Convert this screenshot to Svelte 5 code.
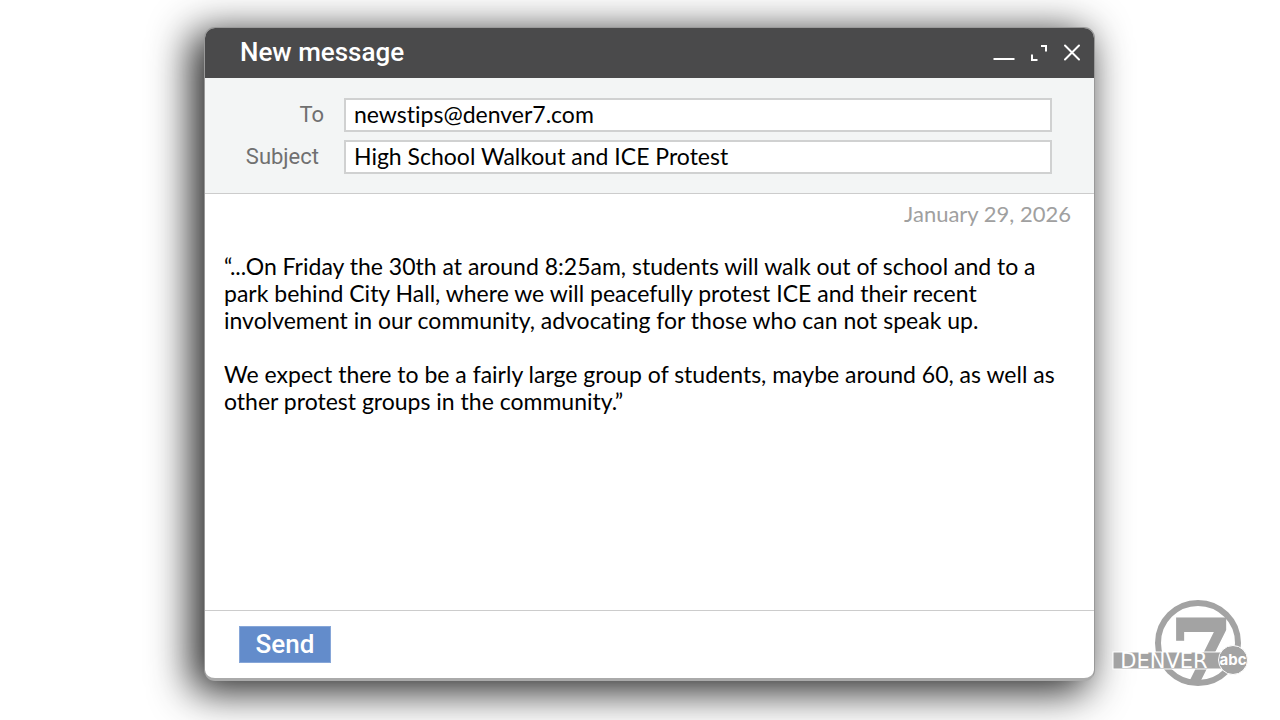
<script lang="ts">
  let to = $state("newstips@denver7.com");
  let subject = $state("High School Walkout and ICE Protest");
  let message = $state(
    "“...On Friday the 30th at around 8:25am, students will walk out of school and to a park behind City Hall, where we will peacefully protest ICE and their recent involvement in our community, advocating for those who can not speak up.\n\n" +
      "We expect there to be a fairly large group of students, maybe around 60, as well as other protest groups in the community.”"
  );
</script>

<main>
  <form class="window" onsubmit={(e) => e.preventDefault()}>
    <header>
      <h1>New message</h1>
      <div class="controls">
        <button type="button" aria-label="Minimize">
          <svg width="22" height="20" viewBox="0 0 22 20">
            <path d="M0.5 16H21.5" />
          </svg>
        </button>
        <button type="button" aria-label="Full screen">
          <svg width="18" height="20" viewBox="0 0 18 20">
            <path d="M11 3H16V8.5M2 11.5V17H7.5" />
          </svg>
        </button>
        <button type="button" aria-label="Close">
          <svg width="18" height="20" viewBox="0 0 18 20">
            <path d="M2 2.5L16 16.5M16 2.5L2 16.5" stroke-linecap="round" />
          </svg>
        </button>
      </div>
    </header>

    <div class="fields">
      <div class="field">
        <label class="to" for="to">To</label>
        <input id="to" type="text" bind:value={to} />
      </div>
      <div class="field">
        <label for="subject">Subject</label>
        <input id="subject" type="text" bind:value={subject} />
      </div>
    </div>

    <div class="body">
      <time datetime="2026-01-29">January 29, 2026</time>
      <textarea aria-label="Message" spellcheck="false" bind:value={message}></textarea>
    </div>

    <footer>
      <button class="send" type="submit">Send</button>
    </footer>
  </form>

  <svg class="logo" width="136" height="88" viewBox="0 0 136 88" role="img" aria-label="Denver 7 abc">
    <circle cx="86" cy="44" r="40" fill="none" stroke="#a3a3a3" stroke-width="6" />
    <text class="seven" x="58" y="85">7</text>
    <rect x="1" y="53" width="112" height="17" fill="#a3a3a3" stroke="#fff" stroke-width="1" />
    <text class="city" x="52" y="69" text-anchor="middle">DENVER</text>
    <circle cx="121" cy="61" r="14.5" fill="#a3a3a3" stroke="#fff" stroke-width="1" />
    <text class="abc" x="121" y="66" text-anchor="middle">abc</text>
  </svg>
</main>

<style>
  :global(body) {
    margin: 0;
    background: #fff;
  }

  main {
    position: relative;
    box-sizing: border-box;
    min-height: 100vh;
    padding: 27px 185px 39px 204px;
    display: flex;
    overflow: hidden;
    font-family: Roboto, sans-serif;
  }

  .window {
    flex: 1;
    min-width: 0;
    display: flex;
    flex-direction: column;
    box-sizing: border-box;
    border: 1px solid #999;
    border-bottom: 3px solid #aaa;
    border-radius: 11px;
    overflow: hidden;
    background: #fff;
    box-shadow: -10px 8px 40px 3px rgba(0, 0, 0, 0.85);
  }

  header {
    height: 50px;
    padding: 0 13px 0 35px;
    display: flex;
    align-items: center;
    justify-content: space-between;
    background: #4a4a4b;
  }

  h1 {
    margin: 0;
    color: #fff;
    font-size: 26px;
    font-weight: 500;
    line-height: 48px;
    padding-bottom: 2px;
  }

  .controls {
    display: flex;
    align-items: center;
    gap: 15px;
  }

  .controls button {
    display: flex;
    padding: 0;
    border: none;
    background: none;
    cursor: pointer;
  }

  .controls path {
    fill: none;
    stroke: #fff;
    stroke-width: 2;
  }

  .fields {
    padding: 20px 42px 19px 35px;
    display: flex;
    flex-direction: column;
    gap: 8px;
    border-bottom: 1px solid #ccc;
    background: #f3f5f5;
  }

  .field {
    display: flex;
    align-items: center;
  }

  label {
    width: 79px;
    margin-right: 25px;
    color: #707070;
    font-size: 22px;
    line-height: 34px;
    text-align: right;
  }

  label.to {
    width: 84px;
    margin-right: 20px;
  }

  input {
    flex: 1;
    min-width: 0;
    height: 34px;
    box-sizing: border-box;
    padding: 0 8px 2px;
    border: 2px solid #d0d1d1;
    background: #fff;
    color: #000;
    font-family: Lato, sans-serif;
    font-size: 23px;
    font-variant-ligatures: none;
  }

  .body {
    flex: 1;
    display: flex;
    flex-direction: column;
    font-family: Lato, sans-serif;
    font-variant-ligatures: none;
  }

  time {
    padding: 6px 23px 0 0;
    color: #a0a0a0;
    font-size: 22px;
    line-height: 28px;
    text-align: right;
  }

  textarea {
    flex: 1;
    margin: 25px 32px 0 19px;
    padding: 0;
    border: none;
    outline: none;
    resize: none;
    background: none;
    color: #000;
    font-family: inherit;
    font-size: 23px;
    font-variant-ligatures: inherit;
    line-height: 27px;
  }

  footer {
    padding: 15px 34px;
    border-top: 1px solid #ccc;
  }

  .send {
    display: block;
    width: 92px;
    height: 37px;
    padding: 0;
    border: 1px solid #86a6d8;
    background: #638ccb;
    color: #fff;
    font-family: inherit;
    font-size: 26px;
    font-weight: 500;
    line-height: 35px;
    cursor: pointer;
  }

  .logo {
    position: absolute;
    right: 32px;
    bottom: 33px;
    overflow: visible;
  }

  .seven {
    fill: #a3a3a3;
    stroke: #a3a3a3;
    stroke-width: 2;
    font: bold 90px "DejaVu Serif", serif;
  }

  .city {
    fill: #fff;
    font: 21px "DejaVu Sans", sans-serif;
  }

  .abc {
    fill: #fff;
    font: bold 15px Inter, sans-serif;
  }
</style>
